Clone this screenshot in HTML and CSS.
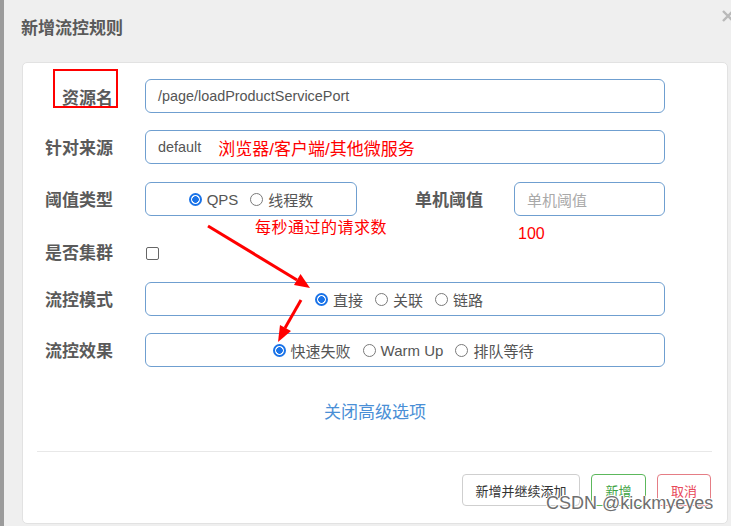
FILE: index.html
```html
<!DOCTYPE html>
<html lang="zh">
<head>
<meta charset="utf-8">
<title>新增流控规则</title>
<link rel="stylesheet" href="styles.css">
</head>
<body>
<div class="screen">
  <div class="strip"></div>
  <div class="dialog">
    <div class="dlg-head">
      <h4 class="title">新增流控规则</h4>
      <svg class="close" width="14" height="14" viewBox="0 0 14 14"><path d="M2 2 L12 12 M12 2 L2 12" stroke="#b9b9b9" stroke-width="2.4" fill="none"/></svg>
    </div>
    <div class="panel">
      <div class="form">
        <div class="row">
          <div class="lbl lbl-top"><span class="marked">资源名</span></div>
          <div class="field">/page/loadProductServicePort</div>
        </div>
        <div class="row">
          <div class="lbl">针对来源</div>
          <div class="field">default<span class="note-inline">浏览器/客户端/其他微服务</span></div>
        </div>
        <div class="row row-type">
          <div class="lbl">阈值类型</div>
          <div class="field field-type">
            <span class="radio"><span class="dot on"></span>QPS</span>
            <span class="radio"><span class="dot"></span>线程数</span>
          </div>
          <div class="lbl lbl-inline">单机阈值</div>
          <div class="field field-small"><span class="placeholder">单机阈值</span></div>
        </div>
        <div class="row row-check">
          <div class="lbl">是否集群</div>
          <span class="checkbox"></span>
        </div>
        <div class="row row-after-check">
          <div class="lbl">流控模式</div>
          <div class="field field-center field-mode">
            <span class="radio"><span class="dot on"></span>直接</span>
            <span class="radio"><span class="dot"></span>关联</span>
            <span class="radio"><span class="dot"></span>链路</span>
          </div>
        </div>
        <div class="row">
          <div class="lbl">流控效果</div>
          <div class="field field-center">
            <span class="radio"><span class="dot on"></span>快速失败</span>
            <span class="radio"><span class="dot"></span>Warm Up</span>
            <span class="radio"><span class="dot"></span>排队等待</span>
          </div>
        </div>
      </div>
      <div class="more">关闭高级选项</div>
      <div class="divider"></div>
      <div class="footer">
        <button class="btn">新增并继续添加</button>
        <button class="btn btn-ok">新增</button>
        <button class="btn btn-cancel">取消</button>
      </div>
    </div>
  </div>

  <div class="note note-qps">每秒通过的请求数</div>
  <div class="note note-100">100</div>
  <svg class="arrows" width="731" height="526" viewBox="0 0 731 526">
    <line x1="208" y1="226" x2="297" y2="280" stroke="#f00" stroke-width="3"/>
    <polygon points="310,288 294,285 300.5,274" fill="#f00"/>
    <line x1="301" y1="300" x2="285" y2="328" stroke="#f00" stroke-width="3"/>
    <polygon points="278,342 291,331 280,325" fill="#f00"/>
  </svg>
  <div class="watermark">CSDN @kickmyeyes</div>
</div>
</body>
</html>
```
FILE: styles.css
```css
html, body {
  margin: 0;
  padding: 0;
}
body {
  width: 731px;
  height: 526px;
  overflow: hidden;
  font-family: "Liberation Sans", "Noto Sans CJK SC", sans-serif;
}
.screen {
  position: relative;
  display: flex;
  height: 526px;
  background: #efefef;
}
.strip {
  width: 4px;
  background: #9b9b9b;
}
.dialog {
  flex: 1;
  display: flex;
  flex-direction: column;
}
.dlg-head {
  position: relative;
  height: 62px;
  box-sizing: border-box;
  padding: 17px 0 0 17px;
}
.title {
  margin: 0;
  font-size: 17px;
  line-height: 20px;
  font-weight: bold;
  color: #5a5a5a;
  font-family: "Noto Sans CJK SC", sans-serif;
}
.close {
  position: absolute;
  top: 9px;
  right: -4px;
}
.panel {
  position: relative;
  flex: 1;
  margin: 0 3px 2px 18px;
  background: #fff;
  border: 1px solid #e2e2e2;
  border-radius: 5px;
}
.form {
  padding: 16px 0 0 14px;
  display: flex;
  flex-direction: column;
}
.row {
  display: flex;
  align-items: center;
  height: 34px;
  margin-top: 17px;
}
.row:first-child { margin-top: 0; }
.row-type { margin-top: 18px; }
.row-check { margin-top: 20px; height: 32px; }
.row-after-check { margin-top: 14px; }
.lbl {
  width: 76px;
  margin-right: 32px;
  display: flex;
  justify-content: flex-end;
  font-family: "Noto Sans CJK SC", sans-serif;
  font-weight: bold;
  font-size: 17px;
  line-height: 20px;
  color: #5a5a5a;
  flex-shrink: 0;
}
.lbl-top {
  align-self: flex-start;
  margin-top: -10px;
}
.marked {
  box-sizing: border-box;
  width: 65px;
  height: 39px;
  margin-right: -5px;
  border: 2px solid #f00;
  display: flex;
  align-items: flex-end;
  justify-content: flex-end;
  padding: 0 3px 0 0;
  line-height: 19px;
}
.field {
  box-sizing: border-box;
  width: 520px;
  height: 34px;
  border: 1px solid #6f9fd0;
  border-radius: 6px;
  padding: 0 12px;
  display: flex;
  align-items: center;
  font-size: 14.4px;
  color: #555;
  flex-shrink: 0;
}
.note-inline {
  margin-left: 17px;
  font-size: 17px;
  color: #f00;
}
.field-type {
  width: 212px;
  justify-content: center;
}
.field-center {
  justify-content: center;
  padding-left: 8px;
}
.field-mode {
  padding-left: 0;
}
.lbl-inline {
  width: auto;
  margin-left: 58px;
  margin-right: 31px;
}
.field-small {
  width: 151px;
}
.placeholder {
  color: #a9a9a9;
  font-size: 15px;
}
.radio {
  display: inline-flex;
  align-items: center;
  font-size: 15px;
  color: #555;
}
.radio + .radio { margin-left: 12px; }
.dot {
  box-sizing: border-box;
  width: 13px;
  height: 13px;
  border-radius: 50%;
  border: 1px solid #7a7a7a;
  margin-right: 5px;
  background: #fff;
}
.dot.on {
  border: 2px solid #1a73e8;
  background: radial-gradient(circle, #1a73e8 0 3px, #fff 3.6px);
}
.checkbox {
  box-sizing: border-box;
  width: 13px;
  height: 13px;
  margin-left: 1px;
  margin-top: 2px;
  border: 1px solid #666;
  border-radius: 2px;
  background: #fff;
}
.more {
  margin-top: 34px;
  text-align: center;
  font-family: "Noto Sans CJK SC", sans-serif;
  font-size: 17px;
  line-height: 20px;
  color: #4a8fd6;
}
.divider {
  margin: 30px 15px 0 14px;
  height: 1px;
  background: #e8e8e8;
}
.footer {
  display: flex;
  justify-content: flex-end;
  padding: 22px 16px 0 0;
}
.btn {
  box-sizing: border-box;
  height: 32px;
  margin: 0 0 0 11px;
  padding: 0;
  background: #fff;
  border: 1px solid #cfcfcf;
  border-radius: 4px;
  font-family: "Noto Sans CJK SC", sans-serif;
  font-size: 13px;
  color: #333;
  width: 118px;
}
.btn-ok {
  width: 55px;
  border-color: #5cb85c;
  color: #3fa345;
}
.btn-cancel {
  width: 54px;
  border-color: #e57d85;
  color: #e8485a;
}
.note {
  position: absolute;
  color: #f00;
  font-size: 16px;
  line-height: 18px;
}
.note-qps {
  left: 255px;
  top: 217px;
  font-family: "Noto Sans CJK SC", sans-serif;
  letter-spacing: 0.5px;
}
.note-100 {
  left: 518px;
  top: 225px;
}
.arrows {
  position: absolute;
  left: 0;
  top: 0;
  pointer-events: none;
}
.watermark {
  position: absolute;
  left: 546px;
  top: 493px;
  font-size: 18px;
  color: #6f6f6f;
  text-shadow: 1px 0 #fff, -1px 0 #fff, 0 1px #fff, 0 -1px #fff;
}
```
